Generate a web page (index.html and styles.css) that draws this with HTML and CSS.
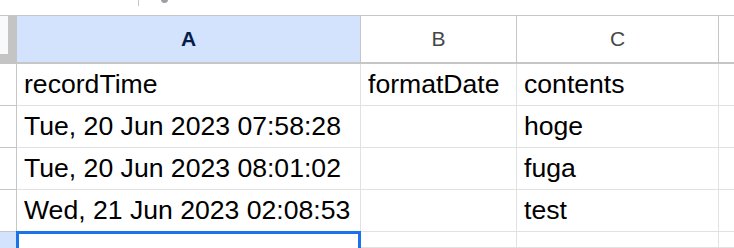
FILE: index.html
```html
<!DOCTYPE html>
<html>
<head>
<meta charset="utf-8">
<link rel="stylesheet" href="styles.css">
</head>
<body>
<div class="toolbar">
  <span class="tick"></span>
  <span class="dot"></span>
</div>
<div class="sheet">
  <div class="corner"><div class="corner-inner"></div></div>
  <div class="colhead active">A</div>
  <div class="colhead">B</div>
  <div class="colhead">C</div>
  <div class="colhead edge"></div>

  <div class="rowhead"></div>
  <div class="cell">recordTime</div>
  <div class="cell">formatDate</div>
  <div class="cell">contents</div>
  <div class="cell edge"></div>

  <div class="rowhead"></div>
  <div class="cell">Tue, 20 Jun 2023 07:58:28</div>
  <div class="cell"></div>
  <div class="cell">hoge</div>
  <div class="cell edge"></div>

  <div class="rowhead"></div>
  <div class="cell">Tue, 20 Jun 2023 08:01:02</div>
  <div class="cell"></div>
  <div class="cell">fuga</div>
  <div class="cell edge"></div>

  <div class="rowhead"></div>
  <div class="cell">Wed, 21 Jun 2023 02:08:53</div>
  <div class="cell"></div>
  <div class="cell">test</div>
  <div class="cell edge"></div>

  <div class="rowhead selrow"></div>
  <div class="cell selected"></div>
  <div class="cell"></div>
  <div class="cell"></div>
  <div class="cell edge"></div>
</div>
</body>
</html>
```

FILE: styles.css
```css
* { box-sizing: border-box; }
html, body {
  margin: 0;
  padding: 0;
  background: #ffffff;
  width: 734px;
  height: 248px;
  overflow: hidden;
  font-family: "Liberation Sans", Arial, sans-serif;
}
.toolbar {
  height: 16px;
  position: relative;
  border-bottom: 1px solid #c4c7c5;
}
.tick {
  position: absolute;
  left: 138px;
  top: 0;
  width: 1px;
  height: 6px;
  background: #c4c7c5;
}
.dot {
  position: absolute;
  left: 161px;
  top: -4px;
  width: 7px;
  height: 7px;
  border-radius: 50%;
  background: #9aa0a6;
}
.sheet {
  display: grid;
  grid-template-columns: 17px 344px 156px 202px 15px;
  grid-template-rows: 48px repeat(4, 42px) 16px;
  overflow: hidden;
}
.corner {
  background: #c4c4c4;
  border-bottom: 2px solid #c4c4c4;
  padding: 0 9px 8px 0;
}
.corner-inner {
  background: #f8f9fa;
  height: 100%;
}
.colhead {
  display: flex;
  align-items: center;
  justify-content: center;
  font-size: 21px;
  color: #444746;
  border-right: 1px solid #c4c7c5;
  border-bottom: 2px solid #c4c7c5;
  padding-bottom: 1px;
}
.colhead.active {
  background: #d3e3fd;
  color: #041e49;
  font-weight: bold;
}
.colhead.edge { border-right: none; }
.rowhead {
  background: #ffffff;
  border-right: 1px solid #c4c7c5;
  border-bottom: 1px solid #c4c7c5;
}
.rowhead.selrow { background: #d3e3fd; border-bottom: none; }
.cell {
  display: flex;
  align-items: flex-end;
  padding: 0 6px 5px 7px;
  font-size: 26.6px;
  color: #000000;
  white-space: nowrap;
  overflow: hidden;
  border-right: 1px solid #e1e1e1;
  border-bottom: 1px solid #e1e1e1;
}
.cell.edge { border-right: none; }
.cell.selected {
  border: 3px solid #1a73e8;
  border-bottom: none;
  margin: -1px 0 0 -1px;
}
```
